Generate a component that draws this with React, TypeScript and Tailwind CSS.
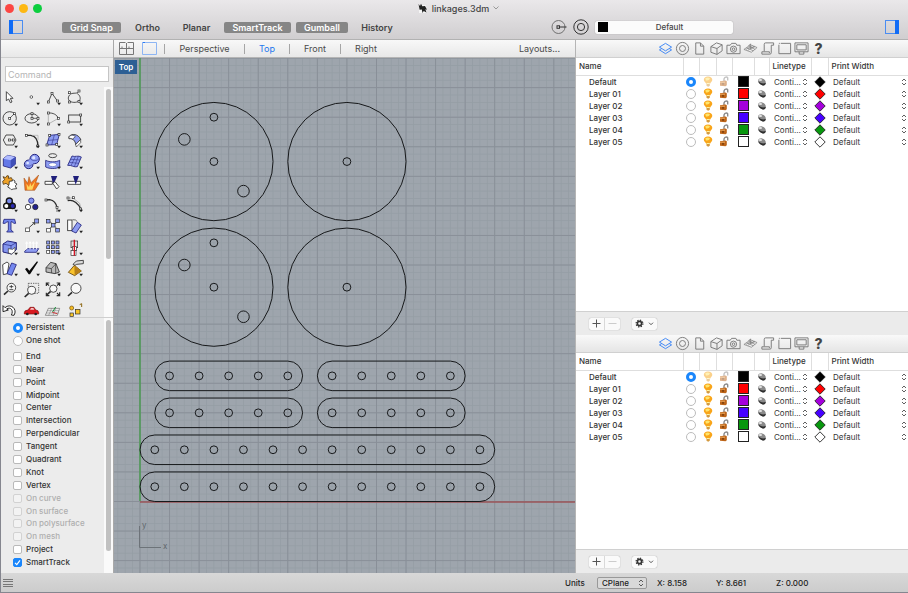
import type { ReactNode } from 'react';

const INK = '#2b2b2b';
const BLUE = '#8e9df2';
const NAVY = '#23237c';

/* ---------- small drawing helpers for the tool palette ---------- */

function Node({ x, y, fill = '#fff' }: { x: number; y: number; fill?: string }) {
  return <rect x={x - 3} y={y - 3} width="6" height="6" fill={fill} stroke={INK} strokeWidth="2" />;
}

function Box({ x, y, s = 11, fill = BLUE }: { x: number; y: number; s?: number; fill?: string }) {
  return <rect x={x} y={y} width={s} height={s} fill={fill} stroke={INK} strokeWidth="2" />;
}

function Lens({ x, y, r, children }: { x: number; y: number; r: number; children?: ReactNode }) {
  return (
    <>
      <path d={`M${x - r + 3} ${y + r - 3}L${x - r - 9} ${y + r + 8}`} stroke={INK} strokeWidth="5" />
      <circle cx={x} cy={y} r={r} fill="#f8f8f8" stroke={INK} strokeWidth="2.5" />
      {children}
    </>
  );
}

type Tool = { name: string; menu?: boolean; art: ReactNode };

const tools: Tool[] = [
  { name: 'Select', art: <path d="M19 14V41L26 36L31 47L36 45L31 34H39Z" fill="#fff" stroke={INK} strokeWidth="2.5" /> },
  { name: 'Point', menu: true, art: <circle cx="28" cy="30" r="4" fill="#fff" stroke={INK} strokeWidth="2" /> },
  {
    name: 'Polyline', menu: true,
    art: <><path d="M16 45L27 19L44 43" fill="none" stroke={INK} strokeWidth="2.5" /><Node x={16} y={45} /><Node x={27} y={19} /><Node x={44} y={42} /></>,
  },
  {
    name: 'Curve', menu: true,
    art: <><path d="M42 13C36 22 26 16 17 21C8 28 8 38 15 43C24 48 38 47 44 40C48 33 44 24 37 20" fill="none" stroke={INK} strokeWidth="2.5" /><Node x={13} y={17} /><Node x={42} y={12} /><Node x={13} y={45} /><Node x={42} y={43} /></>,
  },
  {
    name: 'Circle', menu: true,
    art: <><circle cx="29" cy="31" r="20" fill="none" stroke={INK} strokeWidth="2.5" /><path d="M29 31L43 17" stroke={INK} strokeWidth="2" /><Node x={29} y={31} /><Node x={43} y={17} /></>,
  },
  {
    name: 'Ellipse', menu: true,
    art: <><ellipse cx="29" cy="31" rx="20" ry="14" fill="none" stroke={INK} strokeWidth="2.5" /><path d="M30 16V31H48" fill="none" stroke={INK} strokeWidth="2" /><Node x={30} y={31} /><Node x={30} y={17} /><Node x={48} y={31} /></>,
  },
  {
    name: 'Arc', menu: true,
    art: <><path d="M46 31L16 48V15" fill="none" stroke="#999" strokeWidth="2" /><path d="M16 15C30 14 42 20 46 31" fill="none" stroke={INK} strokeWidth="2.5" /><Node x={16} y={15} /><Node x={16} y={48} /><Node x={46} y={31} /></>,
  },
  {
    name: 'Rectangle', menu: true,
    art: <><rect x="11" y="21" width="36" height="21" fill="none" stroke={INK} strokeWidth="2.5" /><Node x={11} y={42} /><Node x={47} y={21} /></>,
  },
  {
    name: 'Polygon', menu: true,
    art: <><path d="M18 15H40L48 30L40 45H18L10 30Z" fill="none" stroke={INK} strokeWidth="2.5" /><path d="M29 30H40" stroke={INK} strokeWidth="2" /><Node x={28} y={30} /><Node x={40} y={30} /></>,
  },
  {
    name: 'Fillet curves', menu: true,
    art: <><path d="M12 16H26C42 18 48 32 48 50" fill="none" stroke={INK} strokeWidth="4" /><path d="M30 16H48V30" fill="none" stroke="#aaa" strokeWidth="2" /><Node x={13} y={16} /><Node x={47} y={48} /></>,
  },
  {
    name: 'Surface from points', menu: true,
    art: <><path d="M20 16L49 13L41 44L11 45Z" fill={BLUE} stroke={NAVY} strokeWidth="2.5" /><path d="M34 15L26 45M15 31L45 29" stroke={NAVY} strokeWidth="1.5" /><Node x={20} y={16} /><Node x={48} y={13} /><Node x={41} y={43} /><Node x={12} y={45} /></>,
  },
  {
    name: 'Revolve', menu: true,
    art: <><path d="M12 20C20 9 40 12 47 28L32 44C31 32 24 25 12 26Z" fill={BLUE} stroke={INK} strokeWidth="2.5" /><path d="M12 20C19 13 27 16 31 20L23 27C19 25 16 25 12 26Z" fill="#fff" stroke={INK} strokeWidth="2" /><path d="M32 44L47 28V38L34 51Z" fill="#fff" stroke={INK} strokeWidth="2" /></>,
  },
  {
    name: 'Box', menu: true,
    art: <><path d="M10 23L23 13L46 18V40L32 51L10 45Z" fill="#6478e8" stroke={NAVY} strokeWidth="2.5" /><path d="M10 23L23 13L46 18L32 28Z" fill="#b0bcff" /><path d="M32 28L46 18V40L32 51Z" fill="#4050b8" /></>,
  },
  {
    name: 'Boolean union', menu: true,
    art: <><circle cx="20" cy="40" r="13" fill={BLUE} stroke={NAVY} strokeWidth="3" /><circle cx="38" cy="24" r="14" fill={BLUE} stroke={NAVY} strokeWidth="3" /><circle cx="28" cy="32" r="8" fill={BLUE} /><circle cx="35" cy="20" r="5" fill="#dce3ff" /><circle cx="17" cy="36" r="4" fill="#dce3ff" /><path d="M24 22C32 32 44 30 50 24M9 41C18 48 26 46 31 40" fill="none" stroke={NAVY} strokeWidth="1.5" /></>,
  },
  {
    name: 'Project curve', menu: true,
    art: <><ellipse cx="29" cy="14" rx="12" ry="6" fill="none" stroke={INK} strokeWidth="2.5" /><path d="M8 28C20 34 39 34 50 28V48C39 54 20 54 8 48Z" fill={BLUE} stroke={NAVY} strokeWidth="2.5" /><ellipse cx="29" cy="41" rx="12" ry="6" fill="#fff" stroke="#4557bc" strokeWidth="2" /></>,
  },
  {
    name: 'Mesh', menu: true,
    art: <><path d="M21 15C30 19 39 12 49 18L37 47C28 50 20 42 8 43Z" fill={BLUE} stroke={NAVY} strokeWidth="2.5" /><path d="M31 17L18 44M40 16L28 47M17 25L45 27M13 34L41 37" stroke={NAVY} strokeWidth="1.5" /></>,
  },
  {
    name: 'Join',
    art: <><path d="M9 14L17 17Q20 8 26 12L25 19L34 17L38 25L31 30L34 38L25 39L18 34L10 37L8 28L14 23Z" fill="#eea229" stroke="#533812" strokeWidth="2.5" /><path d="M28 28L36 27Q41 21 45 27L44 32L51 36L46 42L50 50L40 51Q33 56 30 49L23 45L27 38Z" fill="#fff" stroke={INK} strokeWidth="2.5" /></>,
  },
  {
    name: 'Explode',
    art: <><path d="M9 55L6 18L17 34L21 14L27 32L50 9L41 32L52 33L38 55Z" fill="#ef7721" stroke="#9c4a10" strokeWidth="1.5" /><path d="M16 53L13 35L21 45L25 33L28 43L40 27L31 53Z" fill="#ffd45a" /></>,
  },
  {
    name: 'Trim',
    art: <><path d="M6 28H28V37H6Z" fill="#fff" stroke={INK} strokeWidth="2.5" /><path d="M24 12L43 12L31 38Z" fill="#20207c" /><path d="M29 33L36 29L48 44L41 51Z" fill="#fff" stroke={INK} strokeWidth="2.5" /></>,
  },
  {
    name: 'Split',
    art: <><path d="M8 28H47V37H8Z" fill="#fff" stroke={INK} strokeWidth="2.5" /><path d="M24 12L42 12L32 38Z" fill="#20207c" /></>,
  },
  {
    name: 'Group', menu: true,
    art: <><path d="M28 15L45 30L43 45H15L11 31Z" fill="#151527" /><circle cx="28" cy="21" r="9" fill="#7889ed" stroke="#161616" strokeWidth="4" /><circle cx="19" cy="36" r="8" fill="#fff" stroke="#161616" strokeWidth="4" /><circle cx="38" cy="36" r="8" fill="#2a2ab0" stroke="#161616" strokeWidth="4" /></>,
  },
  {
    name: 'Ungroup',
    art: <><circle cx="28" cy="20" r="8" fill="#8291f1" stroke={NAVY} strokeWidth="2.5" /><circle cx="18" cy="39" r="8" fill="#fff" stroke={INK} strokeWidth="2.5" /><circle cx="40" cy="39" r="8" fill="#20208e" stroke={INK} strokeWidth="2.5" /></>,
  },
  {
    name: 'Extend', menu: true,
    art: <><path d="M8 18L20 17C33 19 40 30 42 41" fill="none" stroke={INK} strokeWidth="4" /><path d="M42 40V54" stroke={INK} strokeWidth="2" /><Node x={9} y={18} /><Node x={42} y={40} /></>,
  },
  {
    name: 'Edit points', menu: true,
    art: <><path d="M8 20C27 15 41 31 47 44" fill="none" stroke={INK} strokeWidth="4" /><path d="M8 12H24L44 28L48 46" fill="none" stroke="#777" strokeWidth="1.5" /><Node x={9} y={12} /><Node x={25} y={11} /><Node x={47} y={45} /></>,
  },
  {
    name: 'Text',
    art: <path d="M12 13H44L47 25H41Q39 20 33 20V45L40 51H20L25 45V20Q18 20 16 25H9Z" fill="#7387ef" stroke={NAVY} strokeWidth="2.5" />,
  },
  {
    name: 'Move', menu: true,
    art: <><Box x={11} y={39} fill="#fff" /><path d="M21 38L38 23M31 23H38V30" fill="none" stroke={INK} strokeWidth="2.5" /><Box x={38} y={12} s={12} /></>,
  },
  {
    name: 'Copy',
    art: <><path d="M20 19L32 30L44 20M32 30L18 42M32 30L43 43" fill="none" stroke={INK} strokeWidth="2" /><Box x={10} y={13} /><Box x={38} y={12} /><Box x={25} y={25} /><Box x={11} y={40} fill="#fff" /><Box x={38} y={40} /></>,
  },
  {
    name: 'Rotate', menu: true,
    art: <><rect x="8" y="15" width="13" height="32" fill="#fff" stroke={INK} strokeWidth="2.5" /><path d="M20 48L37 22L49 30L33 54Z" fill={BLUE} stroke={NAVY} strokeWidth="2.5" /><path d="M23 14Q33 13 37 20" fill="none" stroke={INK} strokeWidth="2" /></>,
  },
  {
    name: 'Solid edit', menu: true,
    art: <><path d="M9 21L23 12L49 17V38L34 51L9 45Z" fill="#8495ee" stroke={NAVY} strokeWidth="3" /><path d="M9 21L33 26L49 17M33 26V35" fill="none" stroke={NAVY} strokeWidth="2" /><path d="M25 35L38 37L45 31V43L35 51L25 48Z" fill="#fff" stroke={INK} strokeWidth="2" /></>,
  },
  {
    name: 'Extrude surface', menu: true,
    art: <><path d="M8 43L17 35H50L43 46H8Z" fill={BLUE} stroke={NAVY} strokeWidth="2.5" /><path d="M14 37V16M24 37V16M34 37V16M44 37V16M11 20L14 14L17 20M21 20L24 14L27 20M31 20L34 14L37 20M41 20L44 14L47 20" fill="none" stroke="#fff" strokeWidth="3" /></>,
  },
  {
    name: 'Array', menu: true,
    art: <>{[11, 25, 39].map((x) => [12, 26, 40].map((y) => <Box key={`${x}-${y}`} x={x} y={y} s={9} fill={x === 11 && y === 40 ? '#fff' : BLUE} />))}</>,
  },
  {
    name: 'Align', menu: true,
    art: <><Box x={18} y={12} s={20} fill="#ddd" /><Box x={22} y={29} s={12} fill="#fff" /><Box x={18} y={40} s={15} fill="#fff" /><path d="M28 8V56" stroke="#d31525" strokeWidth="4" /></>,
  },
  {
    name: 'Analyze direction', menu: true,
    art: <><path d="M8 20L21 12L27 17L22 47L10 50Z" fill="#fff" stroke={INK} strokeWidth="2.5" /><path d="M21 47L35 15L49 20L35 52Z" fill="#7488ef" stroke={NAVY} strokeWidth="2.5" /></>,
  },
  { name: 'Check objects', menu: true, art: <path d="M9 33L15 29L22 38L45 10L48 12L24 49H20Z" fill="#090909" /> },
  {
    name: 'Solids', menu: true,
    art: <><path d="M9 29L23 13L39 17L49 42L36 47L9 42Z" fill="#b9b9b9" stroke={INK} strokeWidth="2.5" /><path d="M9 29L25 32L39 17M25 32L26 45M38 17L38 45" fill="none" stroke={INK} strokeWidth="2" /></>,
  },
  {
    name: 'Grips', menu: true,
    art: <><path d="M28 22L10 43L29 53L49 39Z" fill="#f8c22b" stroke="#644310" strokeWidth="2.5" /><path d="M28 22L29 52L49 39Z" fill="#b88018" /><path d="M24 19L34 9L55 7V17L35 19L30 22Z" fill="#ddd" stroke={INK} strokeWidth="2.5" /></>,
  },
  { name: 'Zoom in or out', art: <Lens x={34} y={26} r={13}><path d="M28 23H40M34 18V28M28 32H40" stroke={INK} strokeWidth="2.5" /></Lens> },
  { name: 'Zoom window', art: <><rect x="19" y="13" width="31" height="30" fill="none" stroke={INK} strokeWidth="2" strokeDasharray="4 3" /><Lens x={29} y={34} r={12} /></> },
  { name: 'Zoom extents', art: <><path d="M10 21V12H19M41 12H50V21M50 40V50H41M19 50H10V41M11 13L18 20M49 13L42 20M49 49L42 42" fill="none" stroke={INK} strokeWidth="3.5" /><Lens x={31} y={29} r={11} /></> },
  { name: 'Zoom selected', art: <Lens x={33} y={28} r={15} /> },
  { name: 'Undo view', art: <path d="M9 14V32L25 27L20 24C31 16 42 28 34 42L42 43C54 24 31 5 15 20Z" fill="#fff" stroke={INK} strokeWidth="3" /> },
  {
    name: 'Named views',
    art: <><path d="M7 35Q7 28 18 27L24 19H36L41 27Q49 27 50 34V39H7Z" fill="#d91920" stroke="#7c1111" strokeWidth="2" /><path d="M27 21H34L37 26H24Z" fill="#f6c7c7" /><circle cx="16" cy="39" r="4" fill="#222" /><circle cx="41" cy="39" r="4" fill="#222" /></>,
  },
  {
    name: 'Construction plane',
    art: <><path d="M16 22H50L43 43H7Z" fill="#eee" stroke="#666" strokeWidth="2" /><path d="M13 29H48M10 36H46M26 22L17 43M38 22L30 43" stroke="#777" strokeWidth="1.5" /><path d="M28 34L38 18" stroke="#158f38" strokeWidth="3" /><path d="M28 34L43 38" stroke="#d23638" strokeWidth="3" /></>,
  },
  {
    name: 'Object snaps',
    art: <><circle cx="20" cy="21" r="6" fill="#f5bd23" stroke="#6e4c0c" strokeWidth="2" /><Box x={31} y={25} s={14} fill="#f8c528" /><Box x={15} y={36} s={10} fill="#f8c528" /><path d="M44 11L50 8V18" fill="none" stroke="#8c6511" strokeWidth="3" /></>,
  },
];

function Palette() {
  return (
    <div className="-ml-px grid h-[235px] w-[86px] shrink-0 auto-rows-fr grid-cols-4">
      {tools.map((t) => (
        <button key={t.name} type="button" aria-label={t.name} className="flex min-h-0 min-w-0 items-start">
          <svg viewBox="0 0 66 63" className="h-[21px] w-[22px] shrink-0">
            {t.art}
            {t.menu && <path d="M43 47H54L48 55Z" fill="#222" />}
          </svg>
        </button>
      ))}
    </div>
  );
}

/* ---------- object snaps ---------- */

const snaps = ['End', 'Near', 'Point', 'Midpoint', 'Center', 'Intersection', 'Perpendicular', 'Tangent', 'Quadrant', 'Knot', 'Vertex', 'On curve', 'On surface', 'On polysurface', 'On mesh', 'Project', 'SmartTrack'];

const radioClass =
  'm-0 size-[10px] shrink-0 appearance-none rounded-full border border-[#bcbcbc] bg-white checked:border-[3px] checked:border-[#1a86fb]';

function Snaps() {
  return (
    <div className="flex min-h-0 flex-1 overflow-hidden border-t border-[#cfcfcf] text-[8px] leading-[13px] font-medium text-[#333]">
      <div className="flex min-w-0 flex-1 flex-col pt-[3px] pl-[12px]">
        {['Persistent', 'One shot'].map((n, i) => (
          <label key={n} className="flex h-[13px] items-center gap-[3px]">
            <input type="radio" name="snapMode" defaultChecked={i === 0} className={radioClass} />
            {n}
          </label>
        ))}
        <div className="mt-[3px] grid h-[219px] shrink-0 auto-rows-fr">
          {snaps.map((n) => {
            const off = n.startsWith('On ');
            return (
              <label key={n} className={off ? 'flex min-h-0 items-center gap-[4px] text-[#aeaeae]' : 'flex min-h-0 items-center gap-[4px]'}>
                <span className="flex size-[9px] shrink-0">
                  <input
                    type="checkbox"
                    disabled={off}
                    defaultChecked={n === 'SmartTrack'}
                    className="peer m-0 size-[9px] appearance-none rounded-xs border border-[#b9b9b9] bg-white checked:border-[#1a86fb] checked:bg-[#1a86fb] disabled:border-[#d2d2d2] disabled:bg-[#f3f3f3]"
                  />
                  <svg viewBox="0 0 9 9" className="pointer-events-none -ml-[9px] hidden size-[9px] peer-checked:block">
                    <path d="M2 4.8L3.8 6.6L7 2.4" fill="none" stroke="#fff" strokeWidth="1.2" />
                  </svg>
                </span>
                {n}
              </label>
            );
          })}
        </div>
      </div>
      <div className="flex w-[9px] flex-col bg-[#fafafa] px-[2px] pt-[2px]">
        <div className="h-[231px] rounded-full bg-[#c1c1c1]" />
      </div>
    </div>
  );
}

/* ---------- drawing ---------- */

const U = 29.56;
const px = (u: number) => 26 + u * U;
const py = (u: number) => 443.5 - u * U;

function Hole({ x, y, r = 3.9 }: { x: number; y: number; r?: number }) {
  return <circle cx={px(x)} cy={py(y)} r={r} />;
}

function Link({ x, y, length }: { x: number; y: number; length: number }) {
  return (
    <>
      <rect x={px(x)} y={py(y + 0.5)} width={length * U} height={U} rx={U / 2} />
      {Array.from({ length }, (_, i) => (
        <Hole key={i} x={x + 0.5 + i} y={y} />
      ))}
    </>
  );
}

function Viewport() {
  return (
    <div className="relative min-h-0 flex-1 overflow-hidden bg-[#9ea5ad]">
      <svg className="block size-full" role="img" aria-label="Top view of linkages">
        <defs>
          <pattern id="minor" x="25.5" y="443" width={U / 4} height={U / 4} patternUnits="userSpaceOnUse">
            <path d="M0.5 0V8M0 0.5H8" stroke="#949ca4" strokeWidth="0.8" />
          </pattern>
          <pattern id="major" x="25.5" y="443" width={U} height={U} patternUnits="userSpaceOnUse">
            <path d="M0.5 0V30M0 0.5H30" stroke="#898f98" strokeWidth="1" />
          </pattern>
        </defs>
        <rect width="100%" height="100%" fill="url(#minor)" />
        <rect width="100%" height="100%" fill="url(#major)" />
        <path d="M26 0V443" stroke="#4f9a57" strokeWidth="1.6" />
        <path d="M26 444H4000" stroke="#9b5459" strokeWidth="1.4" />
        <g fill="none" stroke="#17191b" strokeWidth="1">
          {[11.5, 7.25].map((y) => (
            <g key={y}>
              <circle cx={px(2.5)} cy={py(y)} r={U * 2} />
              <Hole x={2.5} y={y} />
              <Hole x={2.5} y={y + 1.5} />
              <Hole x={1.5} y={y + 0.75} r={5.8} />
              <Hole x={3.5} y={y - 1} r={5.8} />
              <circle cx={px(7)} cy={py(y)} r={U * 2} />
              <Hole x={7} y={y} />
            </g>
          ))}
          {[4.25, 3].map((y) => (
            <g key={y}>
              <Link x={0.5} y={y} length={5} />
              <Link x={6} y={y} length={5} />
            </g>
          ))}
          <Link x={0} y={1.75} length={12} />
          <Link x={0} y={0.5} length={12} />
        </g>
        <path d="M25.5 468V489.5H47" fill="none" stroke="#6d7379" strokeWidth="1" />
        <g fill="#5f656b" fontSize="8" fontFamily="Inter, sans-serif">
          <text x="28" y="470">y</text>
          <text x="49" y="491">x</text>
        </g>
      </svg>
      <button type="button" className="absolute top-[2px] left-px h-[14px] w-[22px] bg-[#2d5f94] text-[8px] leading-[14px] font-semibold text-white">
        Top
      </button>
    </div>
  );
}

function ViewTabs() {
  const tab = 'flex h-[10px] items-center justify-center border-l border-[#a5a5a5]';
  return (
    <nav className="flex h-[18px] shrink-0 items-center border-b border-[#b5b5b5] bg-linear-to-b from-[#f8f8f8] to-[#e8e8e8] text-[9px] text-[#4a4a4a]">
      <button type="button" aria-label="Four viewports" className="ml-[5px]">
        <svg viewBox="0 0 15 13" className="h-[13px] w-[15px]" fill="none" stroke="#777">
          <path d="M0.5 0.5H6.5M8.5 0.5H14.5V12.5H0.5V0.5M7.5 1V12M1 6.5H14M3 6.5V4.5M10 6.5V4.5" />
        </svg>
      </button>
      <button type="button" aria-label="Single viewport" className="ml-[8px]">
        <svg viewBox="0 0 15 13" className="h-[13px] w-[15px]" fill="none">
          <path d="M0.5 1V12.5H14.5V0.5H4" stroke="#8db5f3" />
          <path d="M0.5 0.5H3.5" stroke="#2b7bf5" />
        </svg>
      </button>
      <button type="button" className={`${tab} ml-[7px] w-[80px]`}>Perspective</button>
      <button type="button" className={`${tab} w-[45px] text-[#1b78ee]`}>Top</button>
      <button type="button" className={`${tab} w-[51px]`}>Front</button>
      <button type="button" className={`${tab} w-[51px]`}>Right</button>
      <button type="button" className="mr-[15px] ml-auto">Layouts...</button>
    </nav>
  );
}

/* ---------- layer panels ---------- */

const panelTabs: { name: string; art: ReactNode }[] = [
  { name: 'Layers', art: <path d="M1.5 6.5L8 2.5L14.5 6.5L8 10.5ZM1.5 9.5L8 13.5L14.5 9.5L12 8M1.5 9.5L4 8" stroke="#3b84f5" /> },
  { name: 'Properties', art: <><circle cx="8" cy="8" r="6.5" /><circle cx="8" cy="8" r="3.2" /></> },
  { name: 'Notes', art: <path d="M4 2H9L12.5 5.5V14H4ZM9 2V5.5H12.5" /> },
  { name: 'Blocks', art: <path d="M2 6L8 2L14 4V10.5L8.5 14.3L2 12ZM2 6L8.5 8V14.3M8.5 8L14 4" /> },
  { name: 'Named views', art: <><path d="M1 4.5H4.5L6 2.5H10.5L11.5 4.5H15V13.5H1Z" /><circle cx="8" cy="8.7" r="3.3" /><circle cx="8" cy="8.7" r="1.4" /></> },
  { name: 'Construction planes', art: <path d="M1 9L8 4L15 7L9 12ZM4 7L11 10.5M6 5.5L13 9M5 10L12 5.5M3 9L10 5M8 8V3L6 5M8 8L13 6" strokeWidth="0.7" /> },
  { name: 'Scripts', art: <path d="M4.5 11V3.5Q4.5 2 6 2H14.5V4.5H12V12.5Q12 14 10.5 14H2V11.5H10V13" /> },
  { name: 'Viewport', art: <path d="M2 4V13.5H14.5V2.5H4M2 2.5H3" /> },
  { name: 'Display', art: <path d="M1 2H15V11.5H1ZM3 4H13V9.5H3ZM5.5 11.5V14H10.5V11.5" /> },
];

function UpDown() {
  return (
    <svg viewBox="0 0 6 8" className="pointer-events-none h-[8px] w-[6px] shrink-0" fill="none" stroke="#4d4d4d" strokeWidth="0.9">
      <path d="M1 3L3 1L5 3M1 5L3 7L5 5" />
    </svg>
  );
}

function Bulb() {
  return (
    <svg viewBox="0 0 10 11" className="h-[11px] w-[10px]">
      <path d="M5 0.6C7.6 0.6 9.3 2 9.3 3.9C9.3 5.4 7.2 6.2 7 8H3.3C3 6.2 0.8 5.5 0.8 3.9C0.8 2 2.5 0.6 5 0.6Z" fill="#f9a51a" />
      <path d="M2.3 2.3Q5 0.8 7 2.5Q6 5 3 4.4Z" fill="#ffe56b" />
      <path d="M3.5 7.5H6.8V9.7L5.2 10.8L3.5 9.8Z" fill="#d49a3f" />
      <path d="M3.5 7.5H6.8" stroke="#fff2a0" />
    </svg>
  );
}

function Padlock() {
  return (
    <svg viewBox="0 0 10 11" className="h-[11px] w-[10px]">
      <path d="M5 5V3Q5.5 1 7.3 1Q9 1 8.7 3V4.5" fill="none" stroke="#8b8b8b" strokeWidth="1.4" />
      <path d="M1 5.2L6.5 4.5L7.8 5.3V9.2L6.5 10.2L1 9.8Z" fill="#bd6519" />
      <path d="M1 5.5H6V7H1Z" fill="#dd954b" />
      <path d="M4 7V8.8" stroke="#4c2507" />
    </svg>
  );
}

function Material() {
  return (
    <svg viewBox="0 0 10 10" className="size-[10px]">
      <path d="M1.2 3.6C1.2 1.8 3 1.2 5 1.4C7.6 1.8 9 3.8 8.8 6C8.6 8 7.4 8.8 5.8 8.4C3.4 7.8 1.2 6 1.2 3.6Z" fill="#8a8a8a" />
      <path d="M1.2 4C3 6.4 6 7 8.8 6C8.6 8 7.4 8.8 5.8 8.4C3.4 7.8 1.3 6 1.2 4Z" fill="#2e2e2e" />
      <ellipse cx="3.4" cy="3" rx="1.7" ry="1" fill="#e4e4e4" />
    </svg>
  );
}

const layers = [
  { name: 'Default', color: '#000000' },
  { name: 'Layer 01', color: '#ff0000' },
  { name: 'Layer 02', color: '#a400dc' },
  { name: 'Layer 03', color: '#4600ff' },
  { name: 'Layer 04', color: '#08970e' },
  { name: 'Layer 05', color: '#ffffff' },
];

const colWidths = ['w-[107px]', 'w-[16px]', 'w-[17px]', 'w-[16px]', 'w-[22px]', 'w-[15px]', 'w-[42px]', 'w-[17px]', ''];
const headings = ['Name', '', '', '', '', '', 'Linetype', '', 'Print Width'];

function LayerPanel({ id, className }: { id: string; className: string }) {
  return (
    <section className={`flex flex-col ${className}`}>
      <div className="flex h-[18px] shrink-0 items-center justify-center border-b border-[#d0d0d0] bg-linear-to-b from-[#f9f9f9] to-[#e5e5e5]">
        {panelTabs.map((t) => (
          <button key={t.name} type="button" aria-label={t.name} className="flex w-[17px] justify-center">
            <svg viewBox="0 0 16 16" className="size-[15px]" fill="none" stroke="#777" strokeWidth="1">{t.art}</svg>
          </button>
        ))}
        <button type="button" className="w-[18px] text-[14px] leading-[14px] font-extrabold text-[#444]">?</button>
      </div>
      <div className="min-h-0 flex-1 bg-white text-[8px] text-[#333]">
        <table className="w-full table-fixed border-collapse">
          <colgroup>
            {colWidths.map((w, i) => <col key={i} className={w} />)}
          </colgroup>
          <thead>
            <tr className="h-[17px]">
              {headings.map((h, i) => (
                <th key={i} className={`border-b border-[#dedede] p-0 text-left font-medium whitespace-nowrap ${i === 0 ? 'pl-[3px]' : 'border-l pl-[3px]'}`}>{h}</th>
              ))}
            </tr>
          </thead>
          <tbody>
            {layers.map((l, i) => (
              <tr key={l.name} className="h-[12px] leading-[12px]">
                <td className="p-0 pl-[13px] font-medium">{l.name}</td>
                <td className="p-0"><input type="radio" name={id} aria-label={`${l.name} current`} defaultChecked={i === 0} className={`${radioClass} mx-auto block`} /></td>
                <td className="p-0"><button type="button" aria-label={`${l.name} visible`} className={`mx-auto block ${i === 0 ? 'opacity-50' : ''}`}><Bulb /></button></td>
                <td className="p-0"><button type="button" aria-label={`${l.name} lock`} className={`mx-auto block ${i === 0 ? 'opacity-50' : ''}`}><Padlock /></button></td>
                <td className="p-0"><button type="button" aria-label={`${l.name} color`} className="mx-auto block size-[11px] border border-[#222]" style={{ backgroundColor: l.color }} /></td>
                <td className="p-0"><button type="button" aria-label={`${l.name} material`} className="mx-auto block"><Material /></button></td>
                <td className="p-0">
                  <div className="flex items-center pl-[5px]">
                    <select aria-label={`${l.name} linetype`} className="h-[12px] w-[28px] appearance-none bg-transparent p-0 text-[8px] leading-[12px]"><option>Conti...</option></select>
                    <UpDown />
                  </div>
                </td>
                <td className="p-0">
                  <button type="button" aria-label={`${l.name} print color`} className="mx-auto block">
                    <svg viewBox="0 0 12 12" className="size-[12px]"><path d="M6 0.8L11.2 6L6 11.2L0.8 6Z" fill={l.color} stroke="#222" strokeWidth="0.9" /></svg>
                  </button>
                </td>
                <td className="p-0">
                  <div className="flex items-center pr-px pl-[5px]">
                    <select aria-label={`${l.name} print width`} className="h-[12px] min-w-0 flex-1 appearance-none bg-transparent p-0 text-[8px] leading-[12px]"><option>Default</option></select>
                    <UpDown />
                  </div>
                </td>
              </tr>
            ))}
          </tbody>
        </table>
      </div>
      <div className="flex h-[24px] shrink-0 items-center gap-[12px] border-t border-[#d0d0d0] bg-[#ebebeb] pl-[13px]">
        <div className="flex h-[12px] w-[31px] divide-x divide-[#d9d9d9] rounded-xs bg-[#fafafa] shadow-[0_0_1px_#888]">
          <button type="button" aria-label="Add layer" className="flex flex-1 items-center justify-center">
            <svg viewBox="0 0 9 9" className="size-[9px]" stroke="#555"><path d="M4.5 0.5V8.5M0.5 4.5H8.5" /></svg>
          </button>
          <button type="button" aria-label="Delete layer" className="flex flex-1 items-center justify-center">
            <svg viewBox="0 0 9 9" className="size-[9px]" stroke="#ccc"><path d="M0.5 4.5H8.5" /></svg>
          </button>
        </div>
        <button type="button" aria-label="Layer options" className="flex h-[12px] w-[25px] items-center justify-center gap-[4px] rounded-xs bg-[#fafafa] shadow-[0_0_1px_#888]">
          <svg viewBox="0 0 9 9" className="size-[9px]" fill="none" stroke="#333">
            <circle cx="4.5" cy="4.5" r="2.1" strokeWidth="1.6" />
            <circle cx="4.5" cy="4.5" r="3.4" strokeWidth="1.2" strokeDasharray="1.35 1.32" />
          </svg>
          <svg viewBox="0 0 6 4" className="h-[4px] w-[6px]" fill="none" stroke="#555"><path d="M1 0.7L3 2.7L5 0.7" /></svg>
        </button>
      </div>
    </section>
  );
}

/* ---------- window chrome ---------- */

function PanelIcon({ right = false }: { right?: boolean }) {
  return (
    <svg viewBox="0 0 14 14" className="size-[14px]">
      <rect x="0.5" y="0.5" width="13" height="13" fill="none" stroke="#4a8df2" />
      <rect x={right ? 10 : 0} y="0" width="4" height="14" fill="#116cf6" />
    </svg>
  );
}

function Header() {
  const plain = 'h-[11px] rounded-xs text-center';
  const on = 'h-[11px] rounded-xs bg-[#868686] text-center text-white';
  return (
    <header className="flex h-[40px] shrink-0 flex-col border-b border-[#b2b2b2] bg-linear-to-b from-[#eae8ea] to-[#d0ced0] text-[9px] leading-[11px] text-[#444]">
      <div className="grid h-[16px] grid-cols-[1fr_auto_1fr] items-center">
        <div className="flex gap-[5px] pl-[4px]">
          <button type="button" aria-label="Close" className="size-[9px] rounded-full bg-[#fc4643]" />
          <button type="button" aria-label="Minimize" className="size-[9px] rounded-full bg-[#fdb813]" />
          <button type="button" aria-label="Full screen" className="size-[9px] rounded-full bg-[#0cce3f]" />
        </div>
        <h1 className="flex items-center gap-[4px] pl-[8px] text-[9px] font-medium">
          <svg viewBox="0 0 10 11" className="h-[11px] w-[10px]">
            <path d="M1 2H8V10H1Z" fill="#f5f5f5" />
            <path d="M0.5 1L2 3L3 0.7L4.3 3.2L7 3L9 6.8L7.4 6.3L8.4 9.4L5.7 8.1L4.5 10L3.8 6.6L1.6 6.8Z" fill="#222" />
          </svg>
          linkages.3dm
          <svg viewBox="0 0 6 4" className="h-[4px] w-[6px]" fill="none" stroke="#999"><path d="M0.5 0.5L3 3L5.5 0.5" /></svg>
        </h1>
      </div>
      <div className="flex h-[22px] items-center pr-[9px] pl-[8px] font-semibold">
        <button type="button" aria-label="Toggle left sidebar"><PanelIcon /></button>
        <button type="button" className={`${on} ml-[39px] w-[59px]`}>Grid Snap</button>
        <button type="button" className={`${plain} w-[53px]`}>Ortho</button>
        <button type="button" className={`${plain} w-[45px]`}>Planar</button>
        <button type="button" className={`${on} ml-[5px] w-[67px]`}>SmartTrack</button>
        <button type="button" className={`${on} ml-[5px] w-[52px]`}>Gumball</button>
        <button type="button" className={`${plain} ml-[4px] w-[50px]`}>History</button>
        <div className="ml-auto flex items-center">
          <button type="button" aria-label="Record history">
            <svg viewBox="0 0 16 16" className="size-[16px]" fill="none" stroke="#333">
              <circle cx="7.5" cy="8" r="6.5" stroke="#666" strokeWidth="0.9" />
              <path d="M8 8H15.5" /><rect x="6" y="6.8" width="2.5" height="2.5" />
            </svg>
          </button>
          <button type="button" aria-label="Object properties" className="ml-[6px]">
            <svg viewBox="0 0 16 16" className="size-[16px]" fill="none" stroke="#333">
              <circle cx="8" cy="8" r="7.2" /><circle cx="8" cy="8" r="3.6" />
            </svg>
          </button>
          <div className="ml-[6px] flex h-[13px] w-[138px] items-center rounded-xs bg-[#fbfbfb] pl-[3px] shadow-[0_0_1px_#888]">
            <span className="size-[10px] shrink-0 bg-black" />
            <select aria-label="Current layer" className="h-[13px] min-w-0 flex-1 appearance-none bg-transparent pr-[2px] text-center text-[8px] font-medium [text-align-last:center]">
              <option>Default</option>
            </select>
          </div>
          <button type="button" aria-label="Toggle right sidebar" className="ml-[152px]"><PanelIcon right /></button>
        </div>
      </div>
    </header>
  );
}

export default function App() {
  return (
    <div className="flex h-screen flex-col overflow-hidden border-b border-l border-[#85868f] bg-[#ececec] font-[Inter,'Liberation_Sans',sans-serif]">
      <Header />
      <main className="flex min-h-0 flex-1">
        <aside className="flex w-[113px] shrink-0 flex-col border-r border-[#a9a9a9]">
          <div className="h-[18px] shrink-0 border-b border-[#cfcfcf] bg-linear-to-b from-[#f8f8f8] to-[#e8e8e8]" />
          <input
            type="text"
            aria-label="Command"
            placeholder="Command"
            className="mx-[4px] mt-[8px] mb-[5px] h-[16px] shrink-0 border border-[#c5c5c5] bg-white px-[2px] text-[9px] placeholder:text-[#b5b5b5]"
          />
          <div className="flex h-[230px] shrink-0 justify-between overflow-hidden">
            <Palette />
            <div className="flex w-[9px] flex-col bg-[#fafafa] px-[2px] pt-[2px]">
              <div className="h-[170px] rounded-full bg-[#c1c1c1]" />
            </div>
          </div>
          <Snaps />
        </aside>
        <div className="flex min-w-0 flex-1 flex-col">
          <ViewTabs />
          <Viewport />
        </div>
        <aside className="flex w-[333px] shrink-0 flex-col border-l border-[#b5b5b5]">
          <LayerPanel id="upper" className="min-h-0 flex-1" />
          <LayerPanel id="lower" className="h-[238px] shrink-0" />
        </aside>
      </main>
      <footer className="flex h-[19px] shrink-0 items-center bg-linear-to-b from-[#d8d8d8] to-[#cccccc] pl-[2px] text-[8px] font-medium text-[#222]">
        <button type="button" aria-label="Menu">
          <svg viewBox="0 0 10 8" className="h-[8px] w-[10px]" stroke="#777"><path d="M0 0.5H10M0 2.5H10M0 5.5H10M0 7.5H10" /></svg>
        </button>
        <div className="ml-auto flex w-[343px] items-center">
          <label htmlFor="units" className="w-[32px]">Units</label>
          <div className="mr-[10px] flex h-[12px] w-[50px] items-center rounded-xs border border-[#999] bg-[#d9d9d9] pr-[2px] pl-[4px]">
            <select id="units" className="min-w-0 flex-1 appearance-none bg-transparent text-[8px]"><option>CPlane</option></select>
            <UpDown />
          </div>
          <span className="w-[59px]">X: 8.158</span>
          <span className="w-[60px]">Y: 8.661</span>
          <span>Z: 0.000</span>
        </div>
      </footer>
    </div>
  );
}
